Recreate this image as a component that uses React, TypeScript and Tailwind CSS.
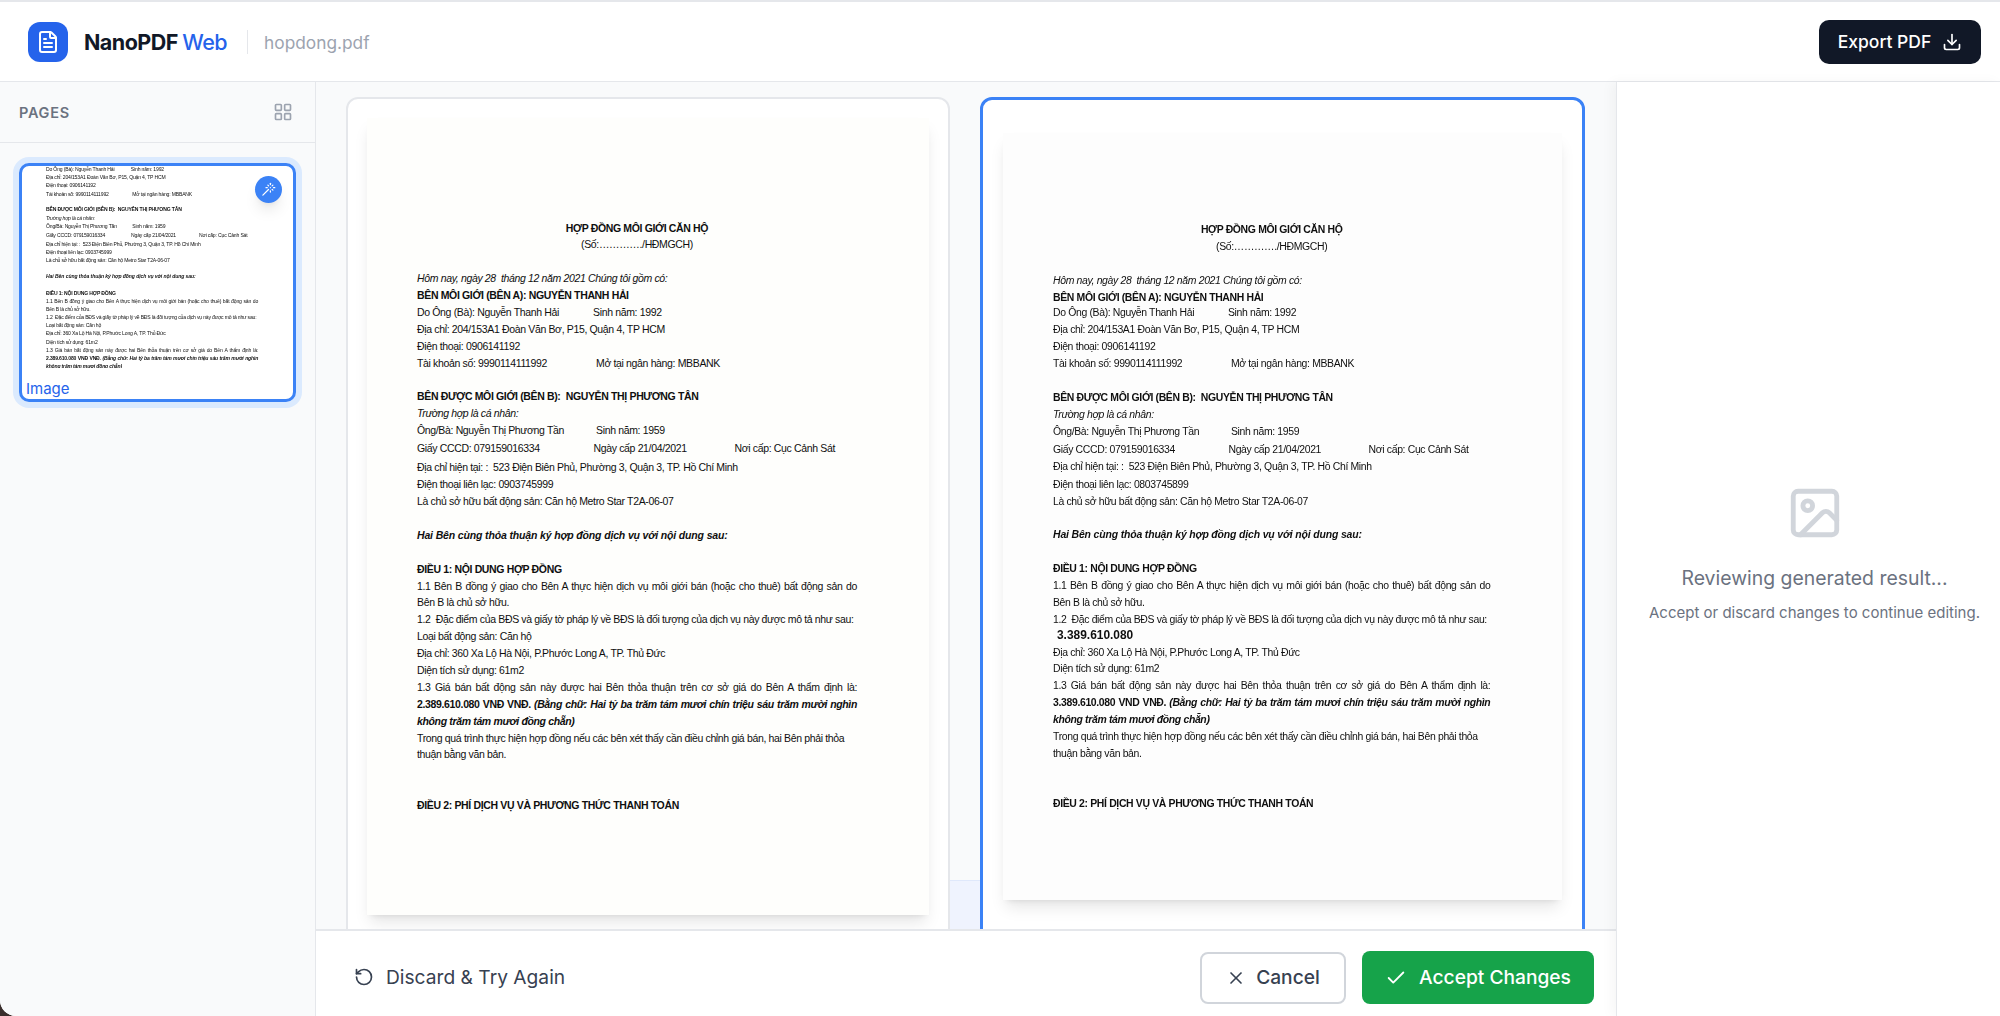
import { Check, Download, FileText, Image as ImageIcon, LayoutGrid, RotateCcw, Wand, X } from "lucide-react";
import type { ReactNode } from "react";

function Row({ children, className = "" }: { children?: ReactNode; className?: string }) {
  return <div className={`h-[16.9px] leading-[16.9px] whitespace-pre ${className}`}>{children}</div>;
}

function Justified({ children, className = "" }: { children: ReactNode; className?: string }) {
  return <div className={`h-[16.9px] leading-[16.9px] text-justify [text-align-last:justify] ${className}`}>{children}</div>;
}

function Col({ children, className }: { children: ReactNode; className: string }) {
  return <span className={`inline-block ${className}`}>{children}</span>;
}

function Contract({ revised = false }: { revised?: boolean }) {
  return (
    <div className="w-[440px] font-['Liberation_Sans',Arial,sans-serif] text-[10.5px] tracking-[-0.35px] text-[#0f0f0f]">
      <Row className="text-center font-bold">HỢP ĐỒNG MÔI GIỚI CĂN HỘ</Row>
      <Row className="text-center">(Số:…………./HĐMGCH)</Row>
      <Row />
      <Row className="italic">Hôm nay, ngày 28  tháng 12 năm 2021 Chúng tôi gồm có:</Row>
      <Row className="font-bold">BÊN MÔI GIỚI (BÊN A): NGUYỄN THANH HẢI</Row>
      <Row><Col className="w-[176px]">Do Ông (Bà): Nguyễn Thanh Hải</Col>Sinh năm: 1992</Row>
      <Row>Địa chỉ: 204/153A1 Đoàn Văn Bơ, P15, Quận 4, TP HCM</Row>
      <Row>Điện thoại: 0906141192</Row>
      <Row><Col className="w-[179px]">Tài khoản số: 9990114111992</Col>Mở tại ngân hàng: MBBANK</Row>
      <Row />
      <Row className="font-bold">BÊN ĐƯỢC MÔI GIỚI (BÊN B):  NGUYỄN THỊ PHƯƠNG TÂN</Row>
      <Row className="italic">Trường hợp là cá nhân:</Row>
      <Row className="h-[18px]!"><Col className="w-[179px]">Ông/Bà: Nguyễn Thị Phương Tần</Col>Sinh năm: 1959</Row>
      <Row className="h-[18.5px]!">
        <Col className="w-[176.5px]">Giấy CCCD: 079159016334</Col>
        <Col className="w-[141px]">Ngày cấp 21/04/2021</Col>
        Nơi cấp: Cục Cảnh Sát
      </Row>
      <Row className="h-[17.5px]!">Địa chỉ hiện tại: :  523 Điện Biên Phủ, Phường 3, Quận 3, TP. Hồ Chí Minh</Row>
      <Row>Điện thoại liên lạc: {revised ? "0803745899" : "0903745999"}</Row>
      <Row>Là chủ sở hữu bất động sản: Căn hộ Metro Star T2A-06-07</Row>
      <Row />
      <Row className="font-bold italic tracking-[-0.15px]">Hai Bên cùng thỏa thuận ký hợp đồng dịch vụ với nội dung sau:</Row>
      <Row />
      <Row className="font-bold">ĐIỀU 1: NỘI DUNG HỢP ĐỒNG</Row>
      <Justified>1.1  Bên B đồng ý giao cho Bên A thực hiện dịch vụ môi giới bán (hoặc cho thuê) bất động sản do</Justified>
      <Row>Bên B là chủ sở hữu.</Row>
      <Row>1.2  Đặc điểm của BĐS và giấy tờ pháp lý về BĐS là đối tượng của dịch vụ này được mô tả như sau:</Row>
      {revised ? (
        <Row className="pl-1 text-[12px] font-bold tracking-normal">3.389.610.080</Row>
      ) : (
        <Row>Loại bất động sản: Căn hộ</Row>
      )}
      <Row>Địa chỉ: 360 Xa Lộ Hà Nội, P.Phước Long A, TP. Thủ Đức</Row>
      <Row>Diện tích sử dụng: 61m2</Row>
      <Justified>1.3  Giá bán bất động sản này được hai Bên thỏa thuận trên cơ sở giá do Bên A thẩm định là:</Justified>
      <Justified className="font-bold">
        {revised ? "3.389.610.080  VND VNĐ. " : "2.389.610.080  VNĐ VNĐ. "}
        <i>(Bằng chữ: Hai tỷ ba trăm tám mươi chín  triệu sáu trăm mười nghìn</i>
      </Justified>
      <Row className="font-bold italic">không trăm tám mươi đồng chẵn)</Row>
      <Row>Trong quá trình thực hiện hợp đồng nếu các bên xét thấy cần điều chỉnh giá bán, hai Bên phải thỏa</Row>
      <Row>thuận bằng văn bản.</Row>
      <Row />
      <Row />
      <Row className="font-bold">ĐIỀU 2: PHÍ DỊCH VỤ VÀ PHƯƠNG THỨC THANH TOÁN</Row>
    </div>
  );
}

function Header() {
  return (
    <header className="flex h-[80px] shrink-0 items-center justify-between border-b border-[#e5e7eb] bg-white pl-[28px] pr-[19px] pt-px">
      <div className="flex items-center">
        <div className="flex h-10 w-10 items-center justify-center rounded-xl bg-[#2563eb] text-white">
          <FileText size={24} />
        </div>
        <h1 className="ml-4 pt-px text-[21.5px] font-bold tracking-tight text-[#111827]">
          NanoPDF <span className="font-medium text-[#2563eb]">Web</span>
        </h1>
        <div className="ml-5 h-6 w-px bg-[#e5e7eb]" />
        <span className="ml-4 pt-px text-[17.3px] text-[#9ca3af]">hopdong.pdf</span>
      </div>
      <button className="flex h-11 w-[162px] items-center justify-center gap-[11px] rounded-[10px] bg-[#111827] text-[17.5px] font-medium text-white">
        <span className="pt-px">Export PDF</span>
        <Download size={20} />
      </button>
    </header>
  );
}

function Sidebar() {
  return (
    <aside className="w-[316px] shrink-0 border-r border-[#e5e7eb] bg-[#f9fafb]">
      <div className="flex h-[61px] items-center justify-between border-b border-[#e5e7eb] pl-[19px] pr-[22px]">
        <span className="pt-px text-[14.5px] font-semibold tracking-wider text-[#6b7280]">PAGES</span>
        <LayoutGrid size={20} className="text-[#9ca3af]" />
      </div>
      <div className="px-[19px] pt-[20px]">
        <div className="relative h-[239px] rounded-[10px] border-[3px] border-[#3b82f6] bg-white ring-[6px] ring-[#dbeafe]">
          <div className="h-[202px] overflow-hidden rounded-t-[8px]">
            <div className="-mt-[90px] ml-[24px] origin-top-left scale-[0.482] pt-[100.5px] blur-[0.35px]">
              <Contract />
            </div>
          </div>
          <span className="absolute -bottom-[1px] left-[4px] text-[15px] text-[#2563eb]">Image</span>
          <span className="absolute right-[11px] top-[10px] flex h-[27px] w-[27px] items-center justify-center rounded-full bg-[#3b82f6] text-white shadow-lg">
            <Wand size={15} />
          </span>
        </div>
      </div>
    </aside>
  );
}

function Footer() {
  return (
    <footer className="flex h-[87px] shrink-0 items-center justify-between border-t-2 border-[#e5e7eb] bg-white pl-[38px] pr-[22px] pt-2">
      <button className="flex items-center gap-3 text-[19.2px] text-[#374151]">
        <RotateCcw size={20} />
        Discard &amp; Try Again
      </button>
      <div className="flex items-center gap-4">
        <button className="flex h-[52px] w-[146px] items-center justify-center gap-2.5 rounded-lg border-2 border-[#d1d5db] bg-white text-[19.2px] font-medium text-[#374151]">
          <X size={20} />
          Cancel
        </button>
        <button className="flex h-[53px] w-[232px] items-center justify-center gap-3 rounded-lg bg-[#16a34a] text-[19.2px] font-medium text-white">
          <Check size={22} />
          Accept Changes
        </button>
      </div>
    </footer>
  );
}

function Comparison() {
  return (
    <div className="relative flex min-h-0 flex-1 gap-[30px] overflow-hidden bg-[#f9fafb] pl-[30px] pr-[31px] pt-[15px]">
      <div className="absolute bottom-0 left-[634px] h-[49px] w-[30px] border-t border-[#dfe8fb] bg-[#eff3fe]" />
      <div className="relative h-[900px] w-[604px] rounded-xl border-2 border-[#e5e7eb] bg-white px-[19px] pt-[19px]">
        <div className="h-[797px] bg-[#fefefc] pl-[50px] pt-[101.5px] shadow-lg">
          <Contract />
        </div>
      </div>
      <div className="relative h-[900px] w-[605px] rounded-xl border-[3px] border-[#3b82f6] bg-white pl-[20px] pr-[20px] pt-[33px]">
        <div className="h-[767px] bg-[#fdfdfd] pl-[50px] pt-[87.5px] shadow-lg">
          <div className="origin-top-left scale-[0.994]">
            <Contract revised />
          </div>
        </div>
      </div>
    </div>
  );
}

function ReviewPanel() {
  return (
    <aside className="z-10 flex w-[384px] shrink-0 flex-col items-center border-l border-[#e5e7eb] bg-white pl-[12px] pt-[402px] shadow-[-4px_0_12px_rgba(0,0,0,0.04)]">
      <ImageIcon size={58} className="text-[#d1d5db]" />
      <p className="mt-[22px] text-[19.4px] text-[#6b7280]">Reviewing generated result...</p>
      <p className="mt-[9px] whitespace-nowrap text-[15px] text-[#6b7280]">Accept or discard changes to continue editing.</p>
    </aside>
  );
}

export default function App() {
  return (
    <div className="h-screen overflow-hidden bg-[#3a2e2c] font-[Inter,sans-serif]">
      <div className="flex h-full flex-col overflow-hidden rounded-bl-[16px] border-t-2 border-[#e5e7eb] bg-white">
        <Header />
        <div className="flex min-h-0 flex-1">
          <Sidebar />
          <main className="flex min-w-0 flex-1 flex-col">
            <Comparison />
            <Footer />
          </main>
          <ReviewPanel />
        </div>
      </div>
    </div>
  );
}
